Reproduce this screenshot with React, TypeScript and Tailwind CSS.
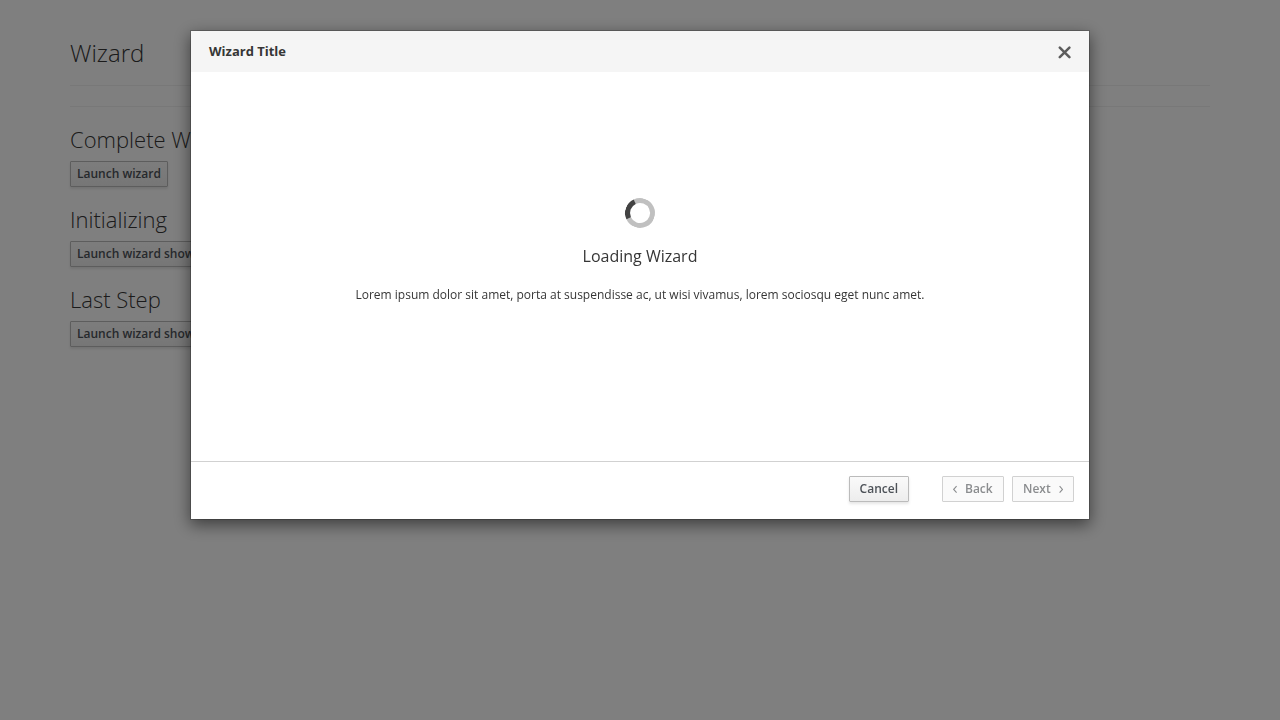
import type { ReactNode } from "react";

const buttonBase =
  "rounded-[1px] border text-xs leading-5 font-semibold whitespace-nowrap py-0.5";
const buttonActive =
  "border-[#bbb] bg-linear-to-b from-[#fafafa] to-[#ededed] text-[#4d5258] shadow-[0_2px_3px_rgba(3,3,3,0.1)]";
const buttonDisabled = "border-[#d1d1d1] bg-[#fafafa] text-[#8b8d8f]";

function Section({ title, action }: { title: string; action: string }) {
  return (
    <section className="flex flex-col items-start gap-2.5 pb-5">
      <h2 className="text-[22px] leading-6 font-light">{title}</h2>
      <button type="button" className={`${buttonBase} ${buttonActive} px-1.5`}>
        {action}
      </button>
    </section>
  );
}

function StepButton({ children }: { children: ReactNode }) {
  return (
    <button
      type="button"
      disabled
      className={`${buttonBase} ${buttonDisabled} flex min-w-[62px] items-center gap-2 px-2.5`}
    >
      {children}
    </button>
  );
}

function Angle({ d }: { d: string }) {
  return (
    <svg width="4" height="8" viewBox="0 0 4 8" fill="none" stroke="currentColor" aria-hidden="true">
      <path d={d} strokeWidth="1.1" />
    </svg>
  );
}

function WizardDialog() {
  return (
    <div
      role="dialog"
      aria-modal="true"
      aria-labelledby="wizard-title"
      className="w-full max-w-[900px] border border-black/20 bg-white bg-clip-padding shadow-[0_5px_15px_rgba(0,0,0,0.5)]"
    >
      <header className="flex items-center justify-between bg-[#f5f5f5] px-[18px] py-2.5">
        <h4 id="wizard-title" className="text-[13px] leading-[21px] font-bold">
          Wizard Title
        </h4>
        <button type="button" aria-label="Close" className="pt-0.5 text-[#5c5c5c]">
          <svg width="13" height="13" viewBox="0 0 13 13" stroke="currentColor" aria-hidden="true">
            <path d="M1.8 1.6l9.6 9.6M11.4 1.6l-9.6 9.6" strokeWidth="2.5" strokeLinecap="round" />
          </svg>
        </button>
      </header>
      <div className="flex min-h-[389px] flex-col items-center pt-[126px] text-center">
        <div
          role="status"
          aria-label="Loading"
          className="size-[30px] rotate-[20deg] rounded-full border-5 border-[#030303]/25 border-l-[#030303]/75"
        />
        <h3 className="mt-4 text-base leading-6">Loading Wizard</h3>
        <p className="mt-[17px] text-xs leading-5">
          Lorem ipsum dolor sit amet, porta at suspendisse ac, ut wisi vivamus, lorem sociosqu eget
          nunc amet.
        </p>
      </div>
      <footer className="flex justify-end gap-2 border-t border-[#d1d1d1] px-[15px] pt-3.5 pb-[17px]">
        <button type="button" className={`${buttonBase} ${buttonActive} mr-[25px] px-2.5`}>
          Cancel
        </button>
        <StepButton>
          <Angle d="M3.6 1.2L0.7 4.4L3.6 7.6" />
          Back
        </StepButton>
        <StepButton>
          Next
          <Angle d="M0.6 1.2L3.5 4.4L0.6 7.6" />
        </StepButton>
      </footer>
    </div>
  );
}

export default function App() {
  return (
    <div className="min-h-screen bg-white font-['Open_Sans',sans-serif] text-xs text-[#363636]">
      <main className="mx-auto max-w-[1180px] px-5 pt-10">
        <h1 className="text-2xl leading-[26px] font-light">Wizard</h1>
        <hr className="mt-[19px] border-[#f1f1f1]" />
        <hr className="mt-5 mb-5 border-[#f1f1f1]" />
        <Section title="Complete Wizard" action="Launch wizard" />
        <Section title="Initializing" action="Launch wizard showing initial state" />
        <Section title="Last Step" action="Launch wizard showing last step" />
      </main>
      <div className="fixed inset-0 flex items-start justify-center overflow-y-auto bg-black/50 py-[30px]">
        <WizardDialog />
      </div>
    </div>
  );
}
